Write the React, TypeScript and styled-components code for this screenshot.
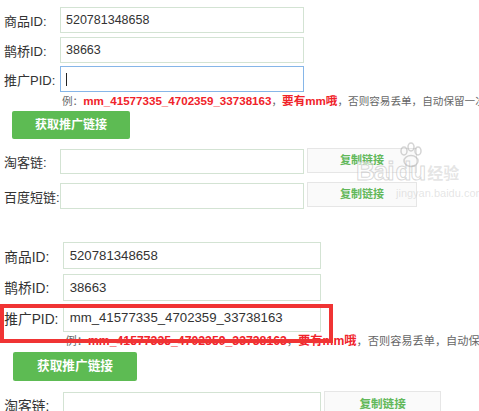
import React from 'react';
import styled, { createGlobalStyle } from 'styled-components';

const GlobalStyle = createGlobalStyle`
  html, body {
    margin: 0;
    padding: 0;
    background: #fff;
    overflow: hidden;
  }
  body {
    font-family: "Liberation Sans", "Noto Sans CJK SC", sans-serif;
    color: #333;
  }
`;

const Page = styled.div`
  width: 479px;
  height: 411px;
  overflow: hidden;
`;

const Panel = styled.div<{ $zoom: number; $after: number }>`
  position: relative;
  zoom: ${(p) => p.$zoom};
  padding: 7px 0 0 4px;
  margin-bottom: ${(p) => p.$after}px;
  display: flex;
  flex-direction: column;
`;

const Row = styled.div<{ $mt: number }>`
  position: relative;
  display: flex;
  align-items: center;
  margin-top: ${(p) => p.$mt}px;
`;

const Label = styled.div`
  width: 56px;
  font-size: 13px;
  color: #333;
  white-space: nowrap;
`;

const Field = styled.div<{ $h: number; $focus?: boolean }>`
  box-sizing: border-box;
  width: 244px;
  height: ${(p) => p.$h}px;
  border: 1px solid ${(p) => (p.$focus ? '#86b6e8' : '#d3e3d3')};
  background: #fff;
  padding: 0 5px;
  font-size: 12.5px;
  line-height: ${(p) => p.$h - 2}px;
  color: #333;
  white-space: nowrap;
  overflow: hidden;
`;

const Caret = styled.span`
  display: inline-block;
  width: 1px;
  height: 13px;
  background: #222;
  vertical-align: middle;
`;

const Highlight = styled.div`
  position: absolute;
  left: -4px;
  top: 0;
  width: 315px;
  height: 37px;
  box-sizing: border-box;
  border: 4.7px solid #f03434;
  z-index: 2;
  pointer-events: none;
`;

const Hint = styled.div`
  margin-left: 58px;
  height: 18px;
  line-height: 18px;
  font-size: 10.6px;
  white-space: nowrap;
  color: #666;
`;

const Red = styled.b`
  color: #f0232a;
  font-size: 11.6px;
`;

const MainButton = styled.div`
  margin: 1px 0 0 8px;
  width: 118px;
  height: 28px;
  line-height: 28px;
  text-align: center;
  background: #5dbb53;
  color: #fff;
  font-size: 12px;
  font-weight: bold;
  border-radius: 2px;
`;

const CopyButton = styled.div`
  box-sizing: border-box;
  margin-left: 3px;
  align-self: flex-start;
  margin-top: -1px;
  width: 110px;
  height: 25px;
  line-height: 23px;
  text-align: center;
  border: 1px solid #e6e6e6;
  background: #fafafa;
  color: #62b85a;
  font-size: 11px;
  font-weight: bold;
`;

const Watermark = styled.div`
  position: absolute;
  left: 356px;
  top: 156px;
  color: rgba(180, 180, 180, 0.35);
  pointer-events: none;
  display: flex;
  flex-direction: column;
  align-items: flex-start;
`;

const MarkLine = styled.div`
  display: flex;
  align-items: flex-end;
  gap: 2px;
`;

const MarkBig = styled.span`
  font-size: 26px;
  font-weight: bold;
  letter-spacing: -1px;
  -webkit-text-stroke: 1px rgba(170, 170, 170, 0.45);
  color: rgba(255, 255, 255, 0.6);
`;

const MarkSmall = styled.span`
  font-size: 16px;
  font-weight: bold;
  margin-bottom: 3px;
`;

const MarkUrl = styled.span`
  font-size: 11px;
  margin: 0 0 0 40px;
`;

function Paw() {
  return (
    <svg width="30" height="26" viewBox="0 0 30 26" style={{ position: 'absolute', left: 40, top: -14 }}>
      <g fill="none" stroke="rgba(170,170,170,0.5)" strokeWidth="1.5">
        <ellipse cx="8" cy="9" rx="3" ry="4" />
        <ellipse cx="15" cy="5" rx="3" ry="4" />
        <ellipse cx="22" cy="9" rx="3" ry="4" />
        <ellipse cx="15" cy="19" rx="7" ry="5.5" />
      </g>
    </svg>
  );
}

interface FormPanelProps {
  zoom: number;
  after: number;
  goodsId: string;
  bridgeId: string;
  pid: string;
  caret?: boolean;
  highlight?: boolean;
  watermark?: boolean;
}

function FormPanel(props: FormPanelProps) {
  return (
    <Panel $zoom={props.zoom} $after={props.after}>
      <Row $mt={0}>
        <Label>商品ID:</Label>
        <Field $h={26}>{props.goodsId}</Field>
      </Row>
      <Row $mt={4}>
        <Label>鹊桥ID:</Label>
        <Field $h={26}>{props.bridgeId}</Field>
      </Row>
      <Row $mt={3}>
        {props.highlight && <Highlight />}
        <Label>推广PID:</Label>
        <Field $h={26} $focus={props.caret}>
          {props.caret ? <Caret /> : props.pid}
        </Field>
      </Row>
      <Hint>
        例：<Red>mm_41577335_4702359_33738163</Red>，<Red>要有mm哦</Red>，否则容易丢单，自动保留一次
      </Hint>
      <MainButton>获取推广链接</MainButton>
      <Row $mt={10}>
        <Label>淘客链:</Label>
        <Field $h={25}></Field>
        <CopyButton>复制链接</CopyButton>
      </Row>
      <Row $mt={9}>
        <Label>百度短链:</Label>
        <Field $h={26}></Field>
        <CopyButton>复制链接</CopyButton>
      </Row>
      {props.watermark && (
        <Watermark>
          <Paw />
          <MarkLine>
            <MarkBig>Bai</MarkBig>
            <MarkBig>du</MarkBig>
            <MarkSmall>经验</MarkSmall>
          </MarkLine>
          <MarkUrl>jingyan.baidu.com</MarkUrl>
        </Watermark>
      )}
    </Panel>
  );
}

export default function App() {
  return (
    <Page>
      <GlobalStyle />
      <FormPanel zoom={1} after={25.6} goodsId="520781348658" bridgeId="38663" pid="" caret watermark />
      <FormPanel
        zoom={1.057}
        after={0}
        goodsId="520781348658"
        bridgeId="38663"
        pid="mm_41577335_4702359_33738163"
        highlight
      />
    </Page>
  );
}
